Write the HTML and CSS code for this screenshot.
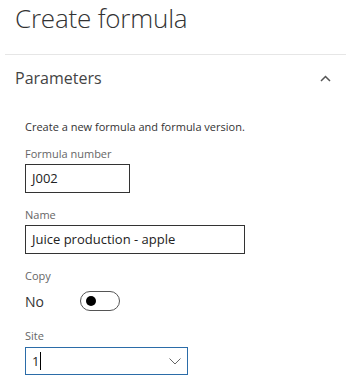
FILE: index.html
```html
<!DOCTYPE html>
<html>
<head>
<meta charset="utf-8">
<link rel="stylesheet" href="styles.css">
</head>
<body>
<div class="page">
  <h1 class="title">Create formula</h1>
  <div class="divider"></div>
  <div class="section-head">
    <span class="section-title">Parameters</span>
    <svg class="chev-up" width="11" height="7" viewBox="0 0 11 7"><path d="M1 6 L5.5 1.5 L10 6" fill="none" stroke="#555" stroke-width="1.5"/></svg>
  </div>
  <div class="form">
    <p class="desc">Create a new formula and formula version.</p>
    <div class="field first">
      <label class="label">Formula number</label>
      <div class="input w-num">J002</div>
    </div>
    <div class="field">
      <label class="label">Name</label>
      <div class="input w-name">Juice production - apple</div>
    </div>
    <div class="field">
      <label class="label">Copy</label>
      <div class="toggle-row">
        <span class="toggle-text">No</span>
        <span class="toggle"><span class="knob"></span></span>
      </div>
    </div>
    <div class="field site">
      <label class="label">Site</label>
      <div class="input w-site focus">
        <span>1<span class="caret"></span></span>
        <svg class="chev-down" width="12" height="7" viewBox="0 0 12 7"><path d="M0.5 0.5 L6 6 L11.5 0.5" fill="none" stroke="#666" stroke-width="1"/></svg>
      </div>
    </div>
  </div>
</div>
</body>
</html>
```
FILE: styles.css
```css
html, body {
  margin: 0;
  padding: 0;
  background: #fff;
}
body {
  font-family: "Open Sans", "Noto Sans", sans-serif;
  color: #333;
}
.page {
  width: 346px;
  height: 385px;
  overflow: hidden;
}
.title {
  margin: 0;
  padding: 0 0 0 15px;
  font-size: 26px;
  font-weight: 300;
  line-height: 36px;
  color: #333;
  letter-spacing: -0.2px;
}
.divider {
  margin: 18px 0 0 5px;
  height: 1px;
  background: #e6e6e6;
}
.section-head {
  display: flex;
  align-items: center;
  justify-content: space-between;
  padding: 0 15px 0 15px;
  height: 46px;
}
.section-title {
  font-size: 16px;
  color: #444;
}
.chev-up {
  display: block;
}
.form {
  padding: 18px 0 0 25px;
}
.desc {
  margin: 0;
  font-size: 11px;
  line-height: 16px;
  color: #333;
}
.field {
  margin-top: 13px;
}
.field.first {
  margin-top: 10px;
}
.field.site {
  margin-top: 11px;
}
.label {
  display: block;
  font-size: 11px;
  line-height: 18px;
  color: #666;
  margin-bottom: 1px;
}
.site .label {
  margin-bottom: 2px;
}
.input {
  box-sizing: border-box;
  height: 29px;
  border: 1px solid #333;
  font-size: 13px;
  line-height: 27px;
  padding: 0 6px;
  color: #222;
  display: flex;
  align-items: center;
  justify-content: space-between;
}
.w-num { width: 105px; }
.w-name { width: 220px; }
.w-site { width: 163px; height: 28px; }
.focus { border-color: #2b6ca8; padding-right: 6px; }
.caret {
  display: inline-block;
  width: 1px;
  height: 18px;
  background: #000;
  vertical-align: -4px;
  margin-left: 1px;
}
.toggle-row {
  display: flex;
  align-items: center;
  height: 30px;
}
.toggle-text {
  font-size: 14px;
  width: 55px;
  color: #333;
}
.toggle {
  box-sizing: border-box;
  width: 40px;
  height: 20px;
  border: 1px solid #555;
  border-radius: 10px;
  display: flex;
  align-items: center;
  padding-left: 5px;
}
.knob {
  width: 10px;
  height: 10px;
  border-radius: 50%;
  background: #000;
}
.chev-down { display: block; }
```
